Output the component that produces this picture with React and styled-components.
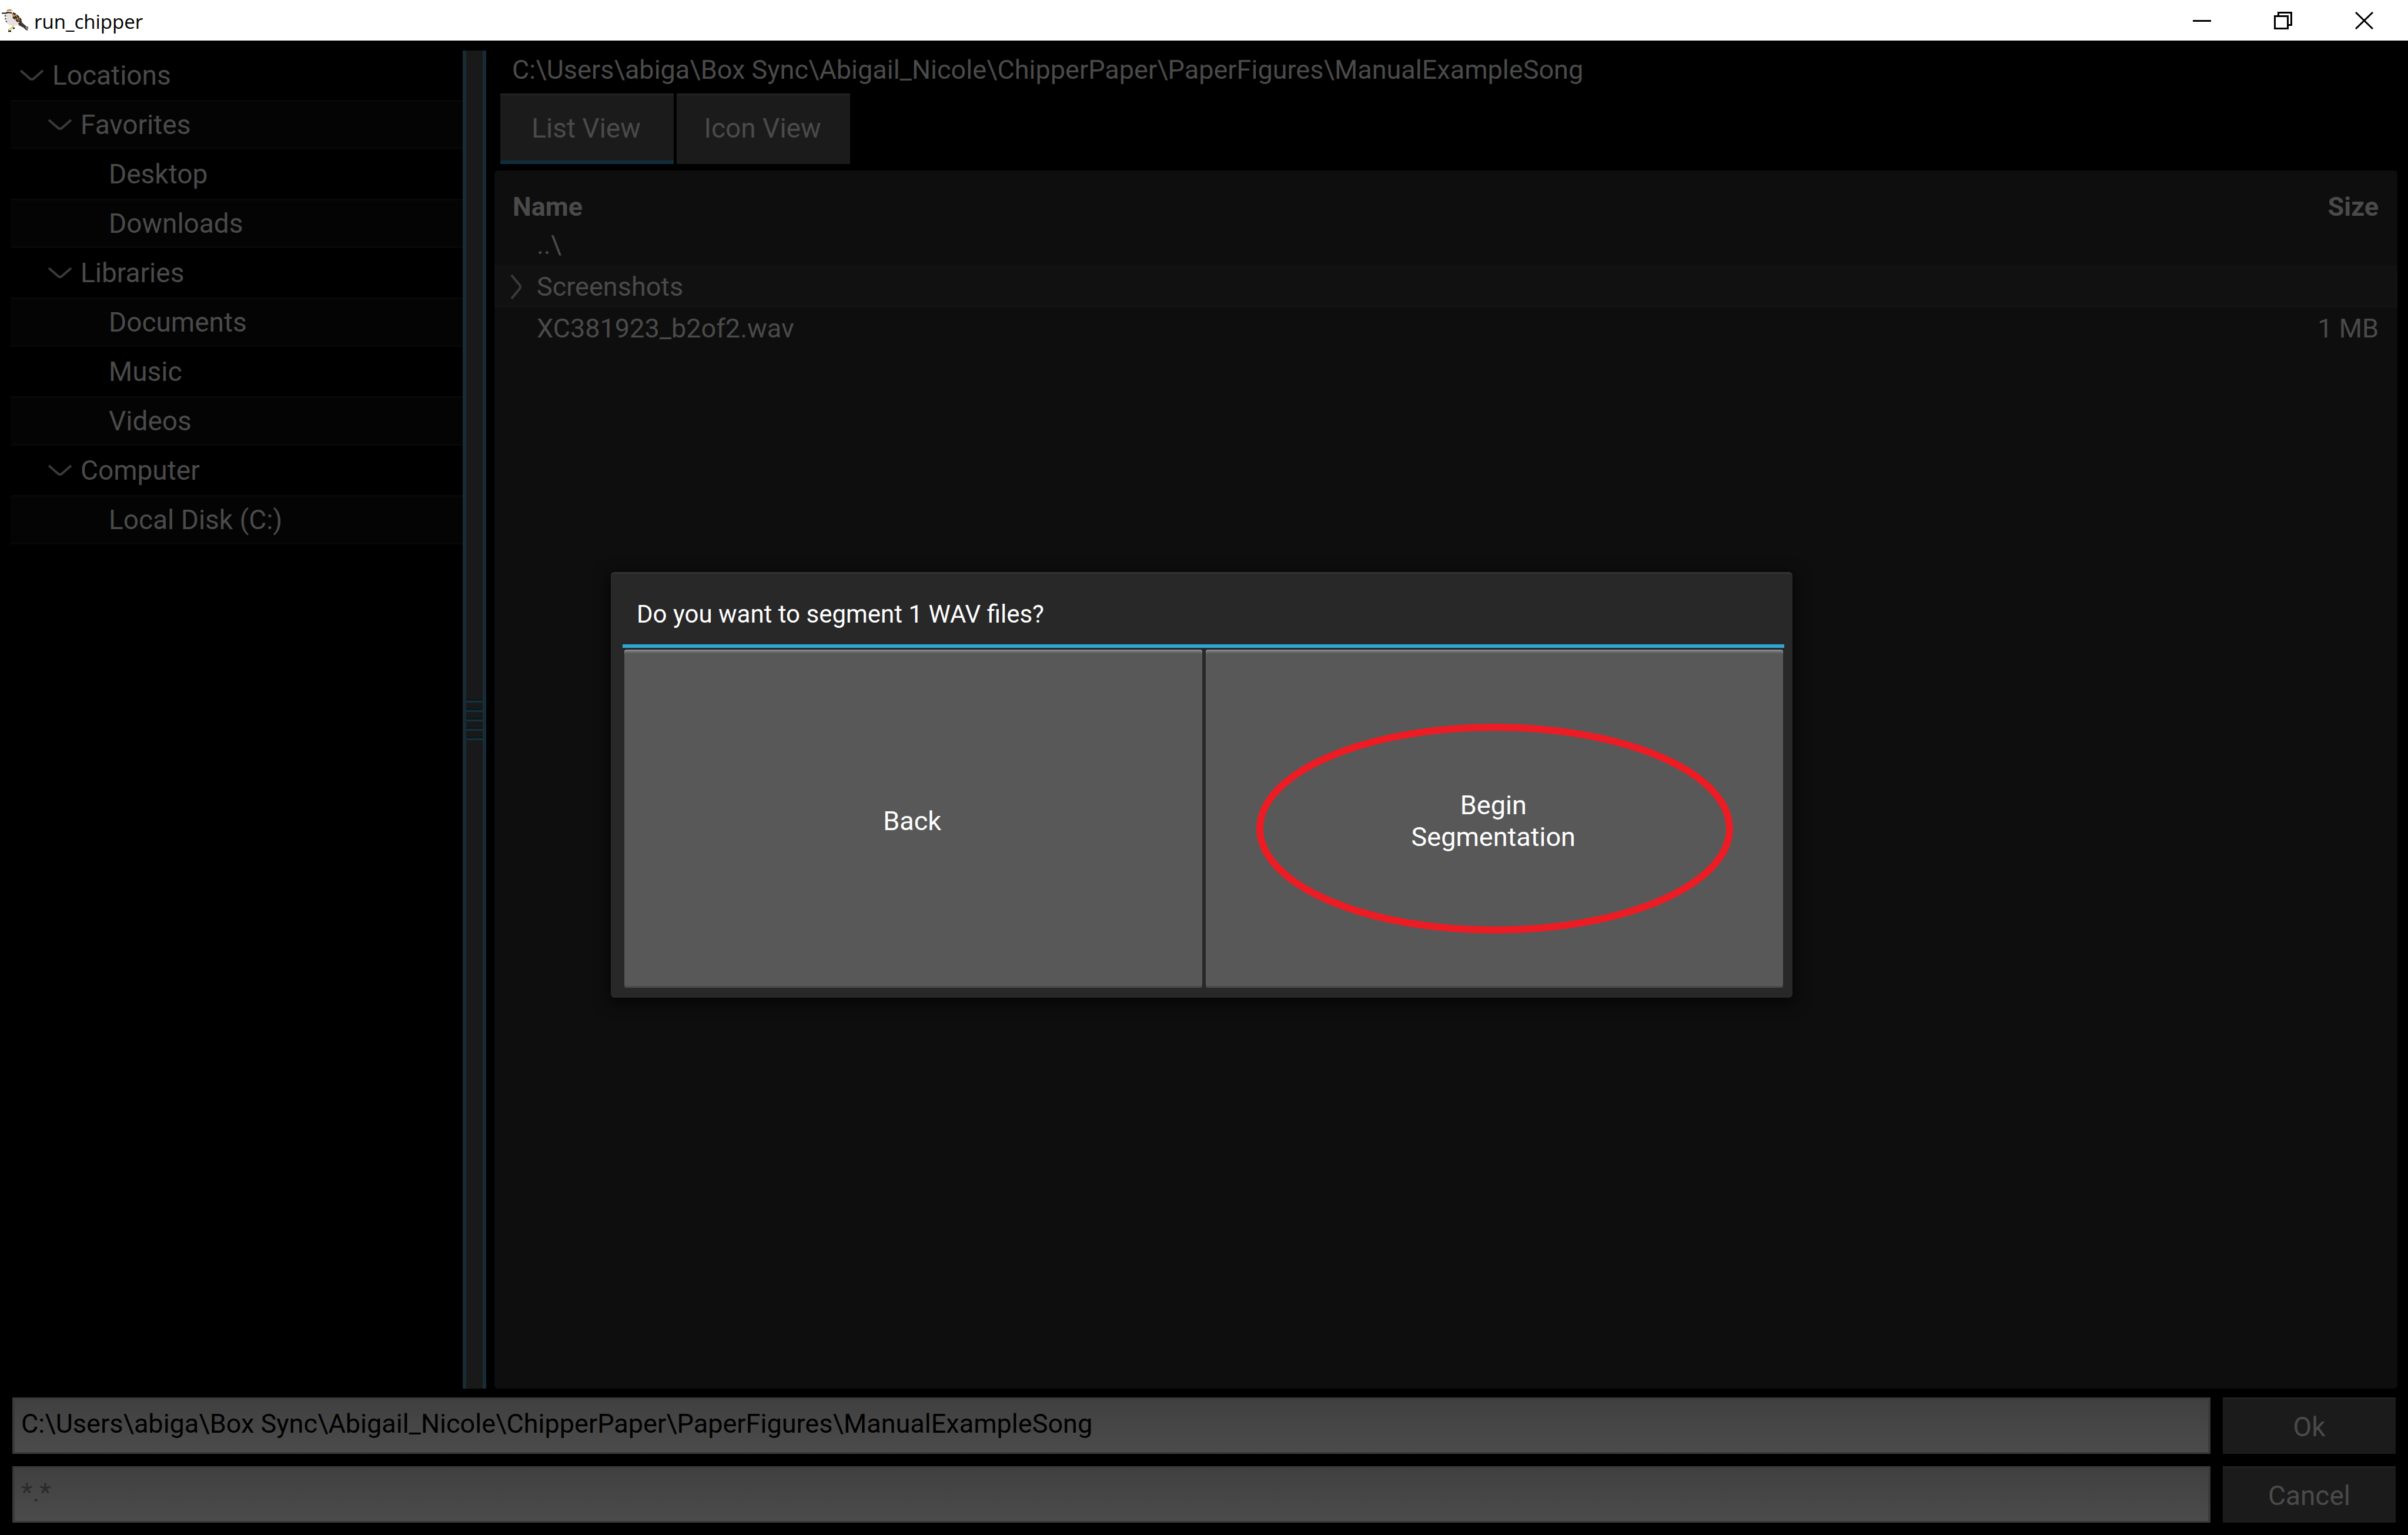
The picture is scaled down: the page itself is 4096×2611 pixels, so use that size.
import React from "react";
import styled, { createGlobalStyle } from "styled-components";

const GlobalStyle = createGlobalStyle`
  *, *::before, *::after { box-sizing: border-box; }
  html, body, #root { height: 100%; margin: 0; }
  body {
    background: #000;
    color: #4a4a4a;
    font: 46px/54px Roboto, "Liberation Sans", sans-serif;
  }
  button, input { font: inherit; color: inherit; margin: 0; border: 0; border-radius: 0; }
`;

const Window = styled.div`
  position: relative;
  display: flex;
  flex-direction: column;
  height: 100vh;
  overflow: hidden;
`;

const TitleBar = styled.header`
  display: flex;
  align-items: center;
  flex: none;
  height: 69px;
  padding: 0 6px 0 3px;
  background: #fff;
  color: #000;
`;

const AppTitle = styled.h1`
  flex: 1;
  margin: 0;
  padding: 5px 0 0 9px;
  font: 400 33px/48px "Open Sans", "Noto Sans", sans-serif;
`;

const WindowButton = styled.button`
  display: grid;
  place-items: center;
  width: 138px;
  height: 66px;
  padding: 0;
  background: none;
`;

const Browser = styled.div`
  display: flex;
  flex: 1;
  min-height: 0;
  padding: 17px 18px 15px;
`;

const Tree = styled.ul`
  flex: none;
  width: 769px;
  margin: 0;
  padding: 0;
  list-style: none;
`;

const TreeRow = styled.li`
  display: flex;
  align-items: center;
  height: 84px;
  padding-left: ${(p) => 16 + p.$level * 48}px;

  &:nth-child(even) {
    background: #040404;
    border: solid #080808;
    border-width: 3px 0;
  }
`;

const TreeToggle = styled.span`
  display: grid;
  width: 55px;
  color: #3a3a3a;
`;

const Splitter = styled.div`
  display: flex;
  flex-direction: column;
  justify-content: center;
  gap: 10px;
  flex: none;
  width: 40px;
  background: #191919;
  border: solid #172c34;
  border-width: 0 6px;
`;

const Grip = styled.i`
  height: 6px;
  background: #17313f;
  border-top: 3px solid #061a1f;
`;

const Main = styled.main`
  display: flex;
  flex-direction: column;
  flex: 1;
  min-width: 0;
  padding-left: 14px;
`;

const PathLabel = styled.p`
  margin: 0;
  padding-left: 30px;
  font-size: 45px;
  line-height: 66px;
`;

const Tabs = styled.div`
  display: flex;
  gap: 5px;
  padding: 7px 10px 11px;
`;

const Tab = styled.button`
  width: 295px;
  height: 120px;
  padding: 0 3px 0 0;
  background: #1b1b1b;
  border-top: 3px solid #222;
  border-bottom: 6px solid ${(p) => (p.$active ? "#0f2e3b" : "#1b1b1b")};
`;

const FilePanel = styled.section`
  flex: 1;
  min-height: 0;
  background: #0e0e0e;
  border-radius: 6px;
`;

const FileTable = styled.table`
  width: 100%;
  border-collapse: collapse;
  font-size: 45px;

  th, td { padding: 0; text-align: left; }
  th { height: 91px; padding-top: 32px; font-weight: 700; }
  td { height: 71px; }
  th:first-child { padding-left: 31px; }
  td:first-child { padding-left: 27px; }
  th:last-child, td:last-child { padding-right: 32px; text-align: right; }
  tbody tr:nth-child(even) { background: #111; box-shadow: inset 0 3px #131313, inset 0 -3px #131313; }
`;

const FileName = styled.div`
  display: flex;
  align-items: center;
`;

const FileToggle = styled.span`
  display: grid;
  width: 45px;
  color: #3a3a3a;
`;

const Footer = styled.form`
  display: grid;
  grid-template-columns: 1fr 294px;
  gap: 21px;
  flex: none;
  padding: 0 21px 21px;
`;

const Field = styled.input`
  width: 100%;
  height: 96px;
  padding: 0 11px 8px;
  background: linear-gradient(#404040, #4b4b4b);
  border: solid #3a3a3a;
  border-width: 3px 4px;
  color: #000;
  font-size: 45px;
  outline: 0;

  &::placeholder { color: #2b2b2b; opacity: 1; }
`;

const FooterButton = styled.button`
  height: 96px;
  padding: 0;
  background: #1b1b1b;
  border: solid #222;
  border-width: 3px 0 0;
`;

const Overlay = styled.div`
  position: absolute;
  inset: 69px 0 0;
  display: grid;
  place-items: center;
  padding: 0 8px 10px 0;
`;

const Dialog = styled.div`
  width: 2010px;
  padding: 0 14px 17px 20px;
  background: #282828;
  border-top: 3px solid #333;
  border-radius: 6px;
  box-shadow: 0 6px 24px 4px rgba(0, 0, 0, 0.6);
  color: #fff;
`;

const DialogTitle = styled.h2`
  margin: 0;
  padding: 18px 0 0 24px;
  border-bottom: 6px solid #2fa7d4;
  font-size: 42px;
  font-weight: 400;
  line-height: 102px;
`;

const DialogActions = styled.div`
  display: grid;
  grid-template-columns: 1fr 1fr;
  gap: 6px;
  padding: 3px 2px 0 3px;
`;

const DialogButton = styled.button`
  position: relative;
  height: 575px;
  padding: 8px 3px 0 0;
  background: #585858;
  border-radius: 4px;
  box-shadow: inset 0 3px #888, inset 0 6px #666, inset 0 -3px #4c4c4c;
  font-size: 45px;
`;

const Highlight = styled.svg`
  position: absolute;
  top: 126px;
  left: 86px;
  width: 811px;
  height: 357px;
  pointer-events: none;
`;

const ChevronDown = () => (
  <svg width="40" height="20" viewBox="0 0 40 20" fill="none" stroke="currentColor" strokeWidth="4" aria-hidden="true">
    <path d="M1 2 17 16q3 2 6 0L39 2" />
  </svg>
);

const ChevronRight = () => (
  <svg width="20" height="42" viewBox="0 0 20 42" fill="none" stroke="currentColor" strokeWidth="4" aria-hidden="true">
    <path d="M2 1 16 18q2 3 0 6L2 41" />
  </svg>
);

const BirdIcon = () => (
  <svg width="46" height="40" viewBox="0 0 46 40" aria-hidden="true">
    <path d="M27 23 33 22 42 30 45 31 44 37 41 36 37 32 29 28Z" fill="#3d3835" />
    <path d="M41 31 44 35" stroke="#a8a29e" strokeWidth="2" />
    <path d="M20 28 17 33 11 36" fill="none" stroke="#e3cf7a" strokeWidth="3" />
    <path d="M19 33h3M11 38h5" stroke="#1c1813" strokeWidth="2.500" />
    <path d="M6 6Q12 2 18 5L24 11 29 24 25 28Q18 31 10 26 5 20 6 12Z" fill="#e6e1de" />
    <path d="M17 8 23 7 33 17 35 23 28 22 19 15Z" fill="#c4955a" />
    <path d="M19 7 24 10M22 13 29 18M26 11 33 19M19 14 28 22M29 20 35 23" fill="none" stroke="#211b17" strokeWidth="2.500" strokeDasharray="5 2" />
    <path d="M8 4 10 1H16L18 4Z" fill="#d9783a" />
    <path d="M10 4.500H17" stroke="#fff" strokeWidth="2" />
    <path d="M0 7.500H7L10 6 17 7" fill="none" stroke="#161616" strokeWidth="2" />
    <path d="M6 11Q5 19 10 25" fill="none" stroke="#161616" strokeWidth="2" strokeDasharray="2 3" />
  </svg>
);

const MinimizeIcon = () => (
  <svg width="31" height="30" viewBox="0 0 31 30" aria-hidden="true"><path d="M0 14h31v3H0z" /></svg>
);

const RestoreIcon = () => (
  <svg width="31" height="30" viewBox="0 0 31 30" fill="none" stroke="#000" strokeWidth="3" aria-hidden="true">
    <path d="M1.500 7.500h22v21h-22zM7.500 7V1.500h22v21H24" />
  </svg>
);

const CloseIcon = () => (
  <svg width="31" height="30" viewBox="0 0 31 30" fill="none" stroke="#000" strokeWidth="3" aria-hidden="true">
    <path d="M1 1 30 29M30 1 1 29" />
  </svg>
);

const currentPath = "C:\\Users\\abiga\\Box Sync\\Abigail_Nicole\\ChipperPaper\\PaperFigures\\ManualExampleSong";

const locations = [
  { name: "Locations", level: 0, open: true },
  { name: "Favorites", level: 1, open: true },
  { name: "Desktop", level: 2 },
  { name: "Downloads", level: 2 },
  { name: "Libraries", level: 1, open: true },
  { name: "Documents", level: 2 },
  { name: "Music", level: 2 },
  { name: "Videos", level: 2 },
  { name: "Computer", level: 1, open: true },
  { name: "Local Disk (C:)", level: 2 },
];

const files = [
  { name: "..\\", size: "" },
  { name: "Screenshots", size: "", folder: true },
  { name: "XC381923_b2of2.wav", size: "1 MB" },
];

export default function App() {
  return (
    <Window>
      <GlobalStyle />
      <TitleBar>
        <BirdIcon />
        <AppTitle>run_chipper</AppTitle>
        <WindowButton type="button" aria-label="Minimize"><MinimizeIcon /></WindowButton>
        <WindowButton type="button" aria-label="Restore"><RestoreIcon /></WindowButton>
        <WindowButton type="button" aria-label="Close"><CloseIcon /></WindowButton>
      </TitleBar>

      <Browser>
        <Tree>
          {locations.map((item) => (
            <TreeRow key={item.name} $level={item.level}>
              <TreeToggle>{item.open && <ChevronDown />}</TreeToggle>
              {item.name}
            </TreeRow>
          ))}
        </Tree>
        <Splitter role="separator" aria-orientation="vertical">
          <Grip /><Grip /><Grip /><Grip /><Grip />
        </Splitter>
        <Main>
          <PathLabel>{currentPath}</PathLabel>
          <Tabs>
            <Tab type="button" $active>List View</Tab>
            <Tab type="button">Icon View</Tab>
          </Tabs>
          <FilePanel>
            <FileTable>
              <thead>
                <tr><th scope="col">Name</th><th scope="col">Size</th></tr>
              </thead>
              <tbody>
                {files.map((file) => (
                  <tr key={file.name}>
                    <td>
                      <FileName>
                        <FileToggle>{file.folder && <ChevronRight />}</FileToggle>
                        {file.name}
                      </FileName>
                    </td>
                    <td>{file.size}</td>
                  </tr>
                ))}
              </tbody>
            </FileTable>
          </FilePanel>
        </Main>
      </Browser>

      <Footer onSubmit={(e) => e.preventDefault()}>
        <Field aria-label="Path" defaultValue={currentPath} />
        <FooterButton type="submit">Ok</FooterButton>
        <Field aria-label="Filter" placeholder="*.*" />
        <FooterButton type="button">Cancel</FooterButton>
      </Footer>

      <Overlay>
        <Dialog role="dialog" aria-labelledby="dialog-title">
          <DialogTitle id="dialog-title">Do you want to segment 1 WAV files?</DialogTitle>
          <DialogActions>
            <DialogButton type="button">Back</DialogButton>
            <DialogButton type="button">
              Begin<br />Segmentation
              <Highlight viewBox="0 0 811 357" aria-hidden="true">
                <ellipse cx="405.5" cy="178.5" rx="399.5" ry="172.5" fill="none" stroke="#ed1c24" strokeWidth="12" />
              </Highlight>
            </DialogButton>
          </DialogActions>
        </Dialog>
      </Overlay>
    </Window>
  );
}
